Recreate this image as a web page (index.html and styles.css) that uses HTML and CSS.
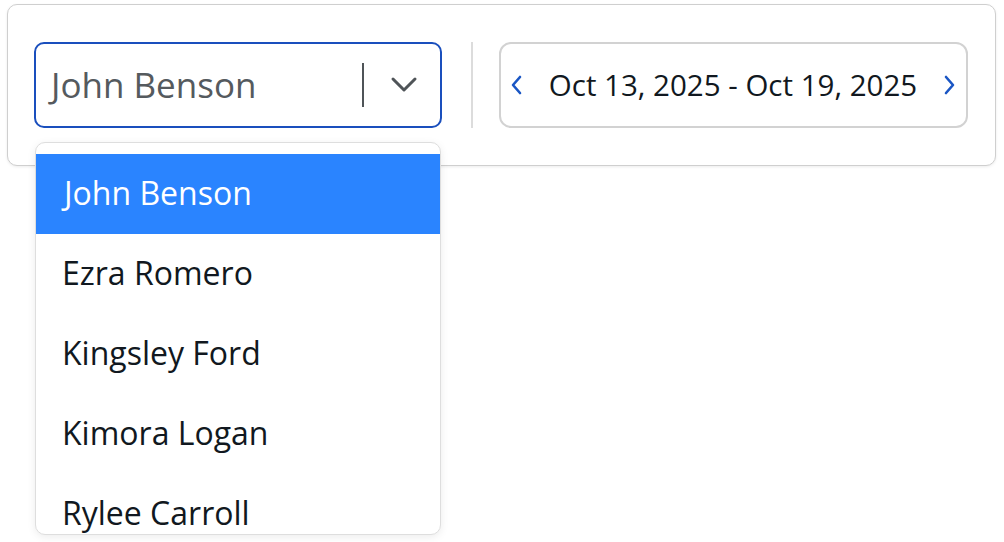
FILE: index.html
```html
<!DOCTYPE html>
<html>
<head>
<meta charset="utf-8">
<link rel="stylesheet" href="styles.css">
</head>
<body>
<div class="page">
  <div class="toolbar">
    <div class="select">
      <span class="select-value">John Benson</span>
      <span class="select-sep"></span>
      <svg class="select-chevron" width="28" height="18" viewBox="0 0 28 18"><path d="M3 3 L14 14 L25 3" fill="none" stroke="#4f5458" stroke-width="3" stroke-linecap="round" stroke-linejoin="round"/></svg>
    </div>
    <div class="divider"></div>
    <div class="range">
      <svg class="nav" width="14" height="22" viewBox="0 0 14 22"><path d="M10 3 L3 11 L10 19" fill="none" stroke="#1a56c4" stroke-width="2.6" stroke-linecap="round" stroke-linejoin="round"/></svg>
      <span class="range-text">Oct 13, 2025 - Oct 19, 2025</span>
      <svg class="nav" width="14" height="22" viewBox="0 0 14 22"><path d="M4 3 L11 11 L4 19" fill="none" stroke="#1a56c4" stroke-width="2.6" stroke-linecap="round" stroke-linejoin="round"/></svg>
    </div>
  </div>
  <ul class="menu">
    <li class="item active">John Benson</li>
    <li class="item">Ezra Romero</li>
    <li class="item">Kingsley Ford</li>
    <li class="item">Kimora Logan</li>
    <li class="item">Rylee Carroll</li>
  </ul>
</div>
</body>
</html>
```

FILE: styles.css
```css
html, body {
  margin: 0;
  padding: 0;
  background: #fff;
}
body {
  font-family: "Open Sans", "Noto Sans", sans-serif;
  color: #111820;
}
.page {
  position: relative;
  width: 1004px;
  height: 542px;
  padding: 4px 8px 0 7px;
  box-sizing: border-box;
}
.toolbar {
  display: flex;
  align-items: center;
  height: 162px;
  box-sizing: border-box;
  border: 1px solid #cfcfcf;
  border-radius: 10px;
  padding: 0 27px 0 26px;
  box-shadow: 0 1px 3px rgba(0,0,0,0.08);
  background: #fff;
}
.select {
  display: flex;
  align-items: center;
  width: 408px;
  height: 86px;
  box-sizing: border-box;
  border: 2px solid #1a4fbd;
  border-radius: 10px;
  padding: 0 22px 0 15px;
}
.select-value {
  flex: 1;
  font-size: 35px;
  color: #555a5e;
  line-height: 1;
  padding-bottom: 2px;
}
.select-sep {
  width: 2px;
  height: 44px;
  background: #4f5458;
  margin-right: 26px;
}
.select-chevron {
  display: block;
}
.divider {
  width: 2px;
  height: 86px;
  background: #dcdcdc;
  margin: 0 26px 0 29px;
}
.range {
  flex: 1;
  display: flex;
  align-items: center;
  justify-content: space-between;
  height: 86px;
  box-sizing: border-box;
  border: 2px solid #d2d2d2;
  border-radius: 12px;
  padding: 0 10px 0 9px;
}
.range-text {
  font-size: 29.5px;
  font-weight: 500;
  color: #111820;
  line-height: 1;
}
.nav { display: block; }
.menu {
  position: absolute;
  left: 35px;
  top: 142px;
  width: 406px;
  height: 393px;
  box-sizing: border-box;
  margin: 0;
  padding: 11px 0 0;
  list-style: none;
  background: #fff;
  border: 1px solid #dedede;
  border-radius: 10px;
  box-shadow: 0 2px 8px rgba(0,0,0,0.08);
  overflow: hidden;
}
.item {
  height: 80px;
  box-sizing: border-box;
  display: flex;
  align-items: center;
  padding-left: 26px;
  padding-bottom: 4px;
  font-size: 32px;
  color: #111820;
}
.item.active {
  background: #2a84ff;
  color: #fff;
  padding-left: 28px;
}
```
